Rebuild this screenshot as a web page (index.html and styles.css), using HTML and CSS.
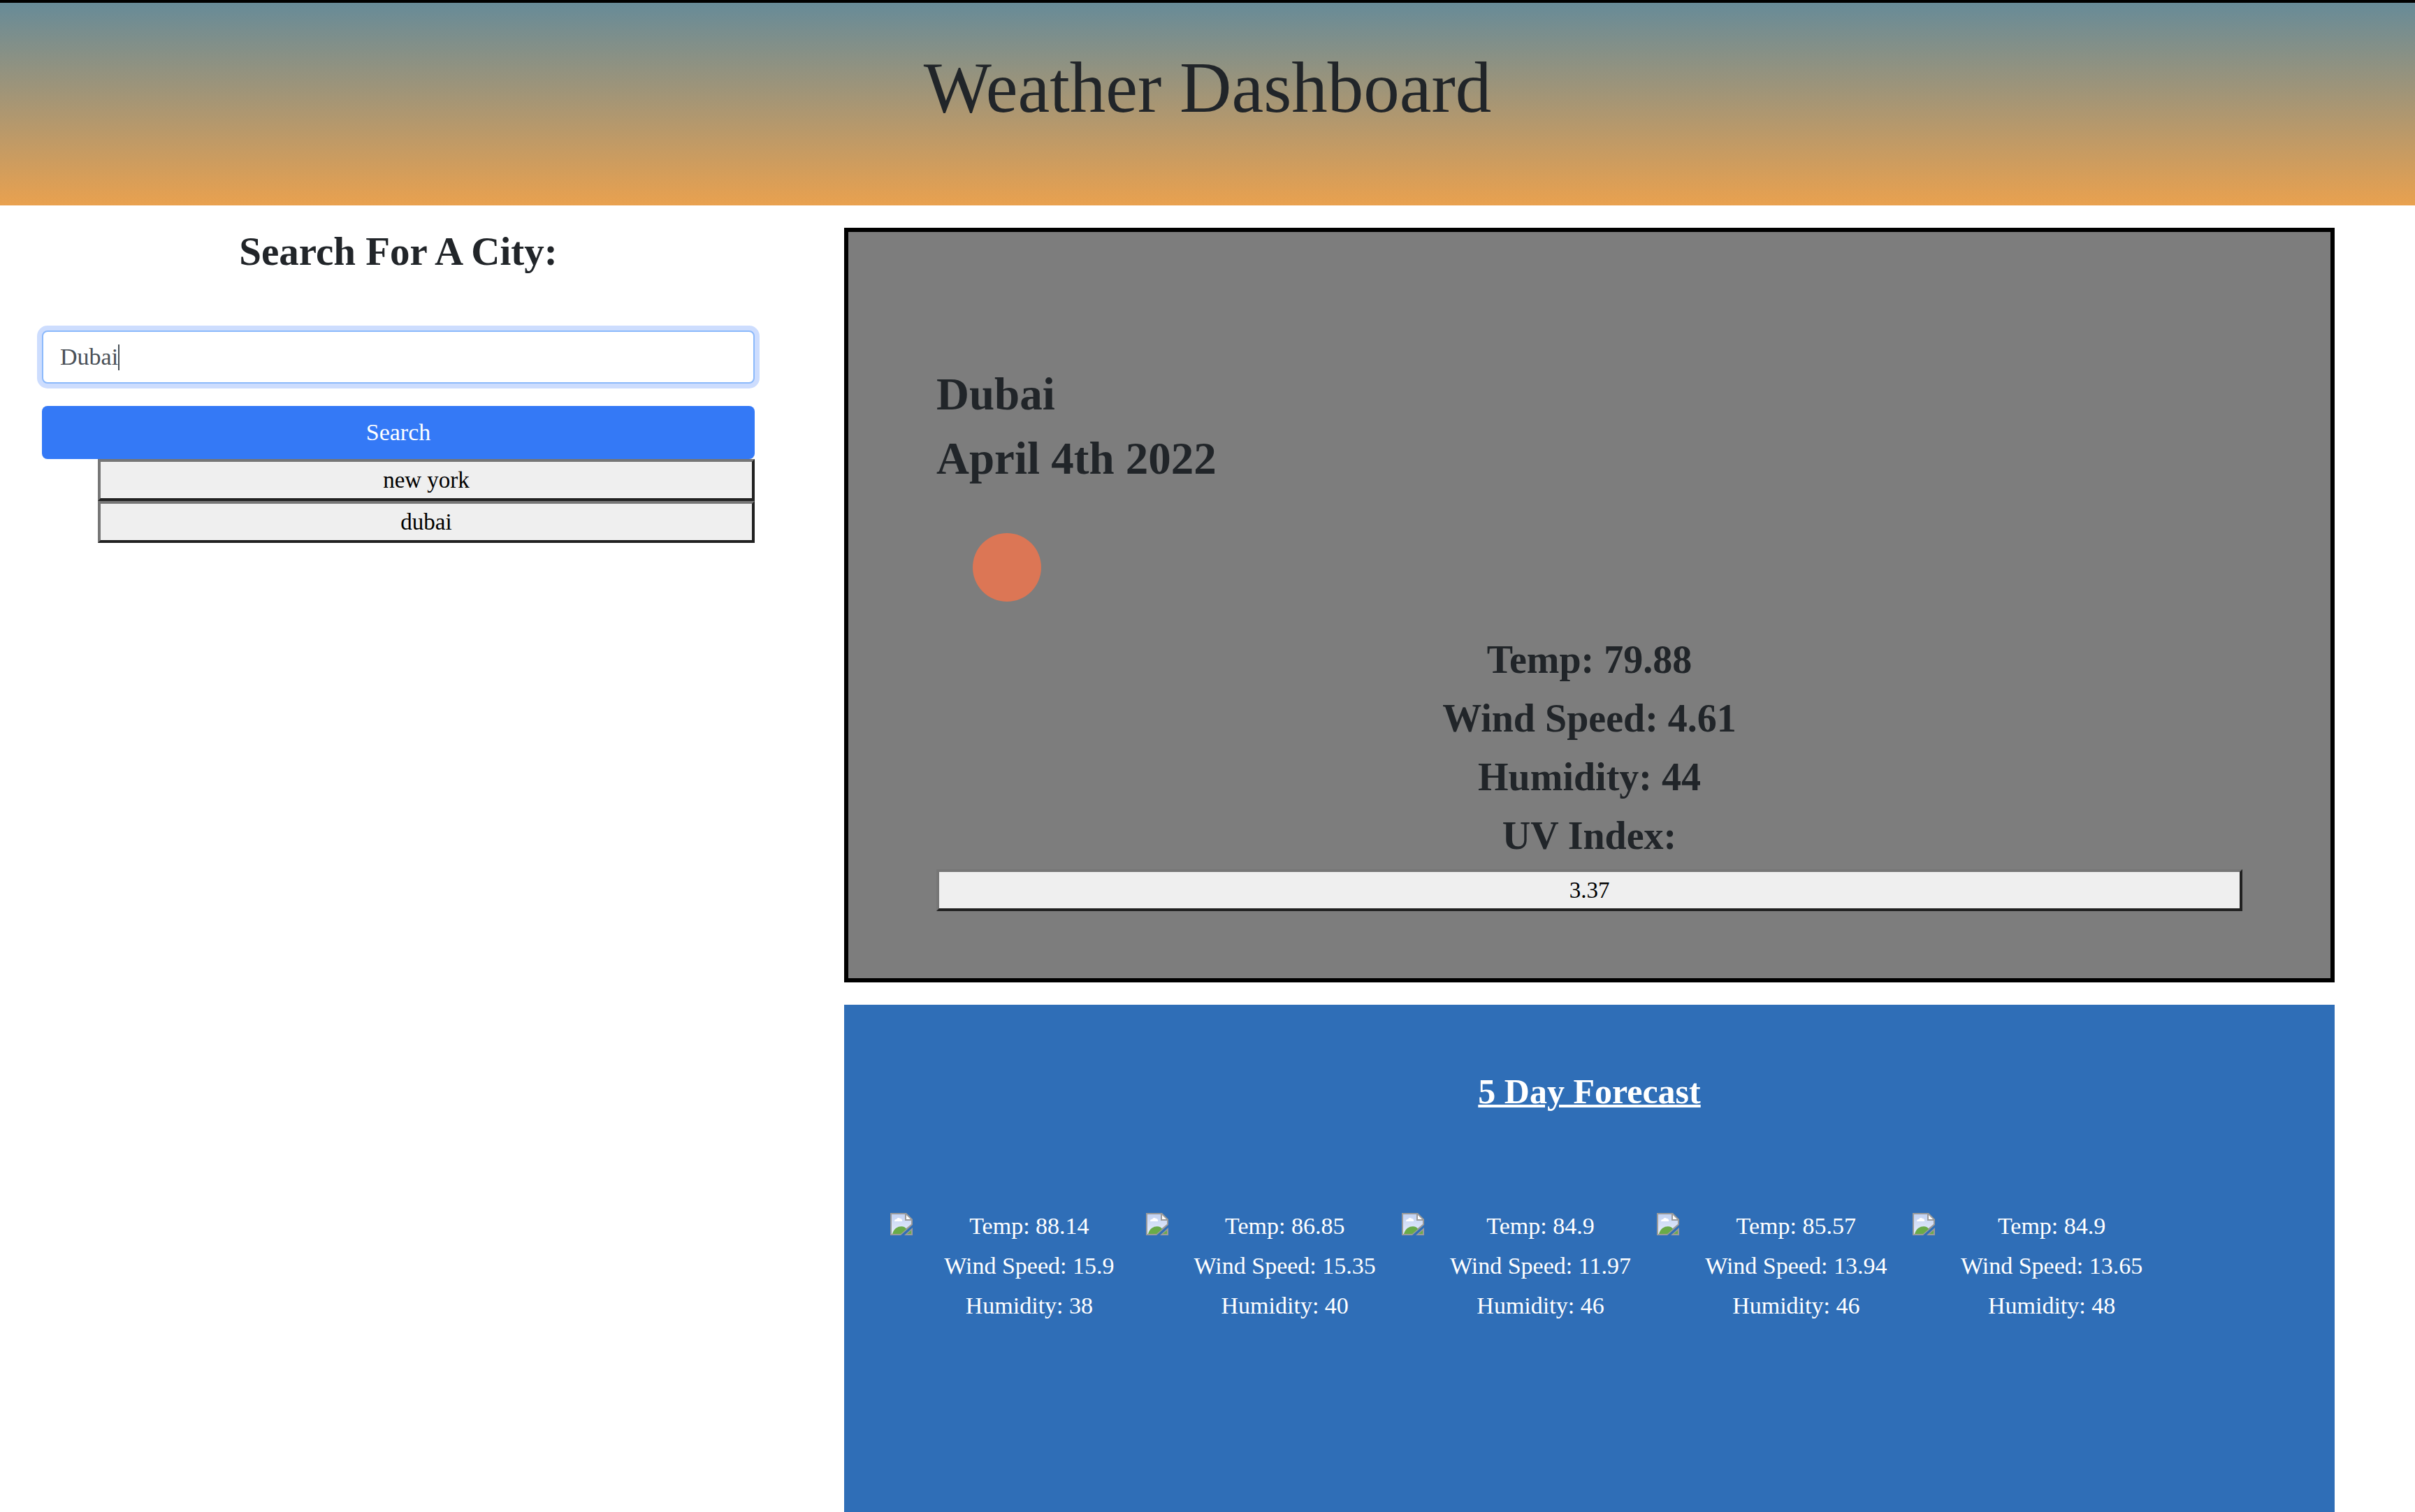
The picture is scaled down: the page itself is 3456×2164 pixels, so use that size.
FILE: index.html
```html
<!DOCTYPE html>
<html lang="en">
<head>
<meta charset="utf-8">
<title>Weather Dashboard</title>
<link rel="stylesheet" href="styles.css">
</head>
<body>
<svg class="defs" aria-hidden="true">
  <defs>
    <linearGradient id="sky" x1="0" y1="0" x2="0" y2="1"><stop offset="0" stop-color="#c3d3f3"/><stop offset="1" stop-color="#e6edfb"/></linearGradient>
    <symbol id="missing" viewBox="0 0 32 32">
      <path d="M0 0H23L32 9V17L15 32H0Z" fill="#9b9b9b"/>
      <path d="M2 2H21V11H30V16L13 30H2Z" fill="url(#sky)"/>
      <path d="M6 12a3 3 0 0 1 3-3 3 3 0 0 1 5-1 3 3 0 0 1 3 4Z" fill="#fff"/>
      <path d="M3 30c3-13 18-13 20-7L15 30Z" fill="#6aab48"/>
      <path d="M23 3V9H29Z" fill="#fff"/>
      <path d="M32 21V32H20Z" fill="#9b9b9b"/>
      <path d="M30 25V30H24Z" fill="#6aab48"/>
    </symbol>
  </defs>
</svg>
<header class="banner"><h1 class="banner-title">Weather Dashboard</h1></header>
<main class="layout">
  <aside class="search">
    <form class="search-form">
      <label class="search-title" for="city">Search For A City:</label>
      <div class="field">
        <input class="city-input" id="city" type="text" value="Dubai">
        <span class="caret"></span>
      </div>
      <button class="search-button" type="button">Search</button>
    </form>
    <div class="history">
      <button class="plain-button" type="button">new york</button>
      <button class="plain-button" type="button">dubai</button>
    </div>
  </aside>
  <div class="results">
    <section class="current">
      <h2 class="place">Dubai</h2>
      <h2 class="place">April 4th 2022</h2>
      <svg class="weather-icon" viewBox="0 0 200 190" role="img" aria-label="Clear sky"><circle cx="101" cy="100" r="49" fill="#dc7655"/></svg>
      <p class="stat">Temp: 79.88</p>
      <p class="stat">Wind Speed: 4.61</p>
      <p class="stat">Humidity: 44</p>
      <p class="stat">UV Index:</p>
      <button class="plain-button uv-button" type="button">3.37</button>
    </section>
    <section class="forecast">
      <h3 class="forecast-title">5 Day Forecast</h3>
      <div class="days">
        <article class="day"><svg class="day-icon"><use href="#missing"/></svg><div class="day-text"><p>Temp: 88.14</p><p>Wind Speed: 15.9</p><p>Humidity: 38</p></div></article>
        <article class="day"><svg class="day-icon"><use href="#missing"/></svg><div class="day-text"><p>Temp: 86.85</p><p>Wind Speed: 15.35</p><p>Humidity: 40</p></div></article>
        <article class="day"><svg class="day-icon"><use href="#missing"/></svg><div class="day-text"><p>Temp: 84.9</p><p>Wind Speed: 11.97</p><p>Humidity: 46</p></div></article>
        <article class="day"><svg class="day-icon"><use href="#missing"/></svg><div class="day-text"><p>Temp: 85.57</p><p>Wind Speed: 13.94</p><p>Humidity: 46</p></div></article>
        <article class="day"><svg class="day-icon"><use href="#missing"/></svg><div class="day-text"><p>Temp: 84.9</p><p>Wind Speed: 13.65</p><p>Humidity: 48</p></div></article>
      </div>
    </section>
  </div>
</main>
</body>
</html>
```

FILE: styles.css
```css
* { box-sizing: border-box; }

body {
  margin: 0;
  min-height: 100vh;
  display: flex;
  flex-direction: column;
  background: #fff;
  color: #212529;
  font-family: Baskerville, "Liberation Serif", serif;
  font-size: 34px;
}

h1, h2, h3, p { margin: 0; }

button, input { font: inherit; }

.defs { position: absolute; width: 0; height: 0; }

.banner {
  border-top: 4px solid #000;
  padding: 60px 0 108px;
  background: linear-gradient(#678b98, #e9a14f);
  text-align: center;
}

.banner-title { font-size: 103px; font-weight: 400; line-height: 122px; }

.layout {
  flex: 1;
  display: grid;
  grid-template-columns: 1020fr 2133fr;
  column-gap: 128px;
  padding: 32px 115px 0 60px;
}

.search-form { display: flex; flex-direction: column; }

.search-title {
  margin-bottom: 79px;
  font-size: 57px;
  font-weight: 700;
  line-height: 68px;
  text-align: center;
}

.field { position: relative; margin-bottom: 32px; }

.city-input {
  display: block;
  width: 100%;
  height: 76px;
  padding: 0 24px;
  border: 2px solid #8bb9fb;
  border-radius: 8px;
  outline: none;
  box-shadow: 0 0 0 7px #cdddfe;
  background: #fff;
  color: #495057;
}

/* Text cursor after the typed city */
.caret {
  position: absolute;
  top: 20px;
  left: 109px;
  width: 2px;
  height: 37px;
  background: #495057;
}

.search-button {
  height: 76px;
  border: 0;
  border-radius: 8px;
  background: #3479f6;
  color: #fff;
}

.history { display: flex; flex-direction: column; padding-left: 80px; }

.plain-button {
  height: 60px;
  padding: 0;
  border: 4px solid;
  border-color: #767676 #212121 #212121 #767676;
  border-radius: 0;
  background: #efefef;
  color: #000;
  font-size: 33px;
}

.results { display: flex; flex-direction: column; gap: 32px; }

.current {
  display: flex;
  flex-direction: column;
  padding: 186px 126px 96px;
  border: 6px solid #000;
  background: #7d7d7d;
}

.place { font-size: 65px; font-weight: 700; line-height: 92px; }

.weather-icon { width: 200px; height: 190px; margin-top: 10px; }

.stat { font-size: 56px; font-weight: 700; line-height: 84px; text-align: center; }

.uv-button { margin-top: 6px; }

.forecast {
  flex: 1;
  padding: 94px 0 64px;
  background: #2f6eb7;
  color: #fff;
}

.forecast-title {
  margin-bottom: 134px;
  font-size: 50px;
  font-weight: 700;
  line-height: 60px;
  text-align: center;
  text-decoration: underline;
  text-decoration-thickness: 4px;
}

.days {
  display: grid;
  grid-template-columns: repeat(5, 1fr);
  padding: 0 238px 0 66px;
}

.day { display: flex; }

.day-icon { flex: none; width: 32px; height: 32px; margin-top: 10px; }

.day-text { flex: 1; line-height: 57px; text-align: center; }
```
